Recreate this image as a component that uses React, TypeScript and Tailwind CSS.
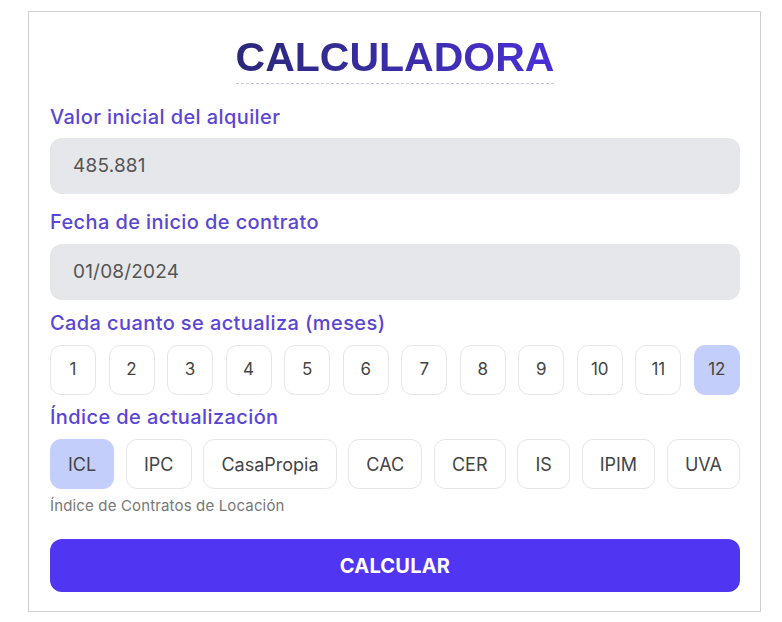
import { useState } from "react";

const MESES = [1, 2, 3, 4, 5, 6, 7, 8, 9, 10, 11, 12];
const INDICES = ["ICL", "IPC", "CasaPropia", "CAC", "CER", "IS", "IPIM", "UVA"];

export default function App() {
  const [meses, setMeses] = useState(12);
  const [indice, setIndice] = useState("ICL");

  return (
    <div className="min-h-screen bg-white pt-[11px] pl-[28px] font-['Inter',sans-serif]">
      <div className="w-[733px] border border-[#cfcfcf] bg-white pl-[21px] pr-[20px] pt-[21px] pb-[19px]">
        <div className="flex justify-center">
          <h1 className="border-b border-dashed border-[#c9c9d4] pb-[2px] font-['Liberation_Sans',Arial,sans-serif] text-[41px] font-bold leading-[48px] bg-gradient-to-r from-[#2a2878] to-[#4a2fd6] bg-clip-text text-transparent">
            CALCULADORA
          </h1>
        </div>

        <label className="mt-[20px] block text-[20px] font-medium leading-[26px] tracking-[0.02em] text-[#5a46d4]">
          Valor inicial del alquiler
        </label>
        <div className="mt-[8px] flex h-[56px] items-center rounded-[12px] bg-[#e6e7ea] px-[23px] text-[19px] tracking-[0.01em] text-[#555]">
          485.881
        </div>

        <label className="mt-[15px] block text-[20px] font-medium leading-[26px] tracking-[0.02em] text-[#5a46d4]">
          Fecha de inicio de contrato
        </label>
        <div className="mt-[9px] flex h-[56px] items-center rounded-[12px] bg-[#e6e7ea] px-[23px] text-[19px] tracking-[0.01em] text-[#555]">
          01/08/2024
        </div>

        <label className="mt-[10px] block text-[20px] font-medium leading-[26px] tracking-[0.02em] text-[#5a46d4]">
          Cada cuanto se actualiza (meses)
        </label>
        <div className="mt-[9px] flex justify-between">
          {MESES.map((m) => (
            <button
              key={m}
              onClick={() => setMeses(m)}
              className={
                m === meses
                  ? "h-[50px] w-[46px] rounded-[11px] border border-[#c4cefb] bg-[#c4cefb] text-[17px] text-[#444]"
                  : "h-[50px] w-[46px] rounded-[11px] border border-[#e6e6e6] bg-white text-[17px] text-[#444]"
              }
            >
              {m}
            </button>
          ))}
        </div>

        <label className="mt-[9px] block text-[20px] font-medium leading-[26px] tracking-[0.02em] text-[#5a46d4]">
          Índice de actualización
        </label>
        <div className="mt-[9px] flex justify-between">
          {INDICES.map((i) => (
            <button
              key={i}
              onClick={() => setIndice(i)}
              className={
                i === indice
                  ? "h-[50px] rounded-[11px] border border-[#c4cefb] bg-[#c4cefb] px-[17px] text-[18px] text-[#444]"
                  : "h-[50px] rounded-[11px] border border-[#e6e6e6] bg-white px-[17px] text-[18px] text-[#444]"
              }
            >
              {i}
            </button>
          ))}
        </div>
        <p className="mt-[7px] text-[15px] leading-[20px] tracking-[0.01em] text-[#777]">
          Índice de Contratos de Locación
        </p>

        <button className="mt-[23px] flex h-[53px] w-full items-center justify-center rounded-[12px] bg-[#5035f2] text-[20px] font-bold tracking-[0.01em] text-white">
          CALCULAR
        </button>
      </div>
    </div>
  );
}
